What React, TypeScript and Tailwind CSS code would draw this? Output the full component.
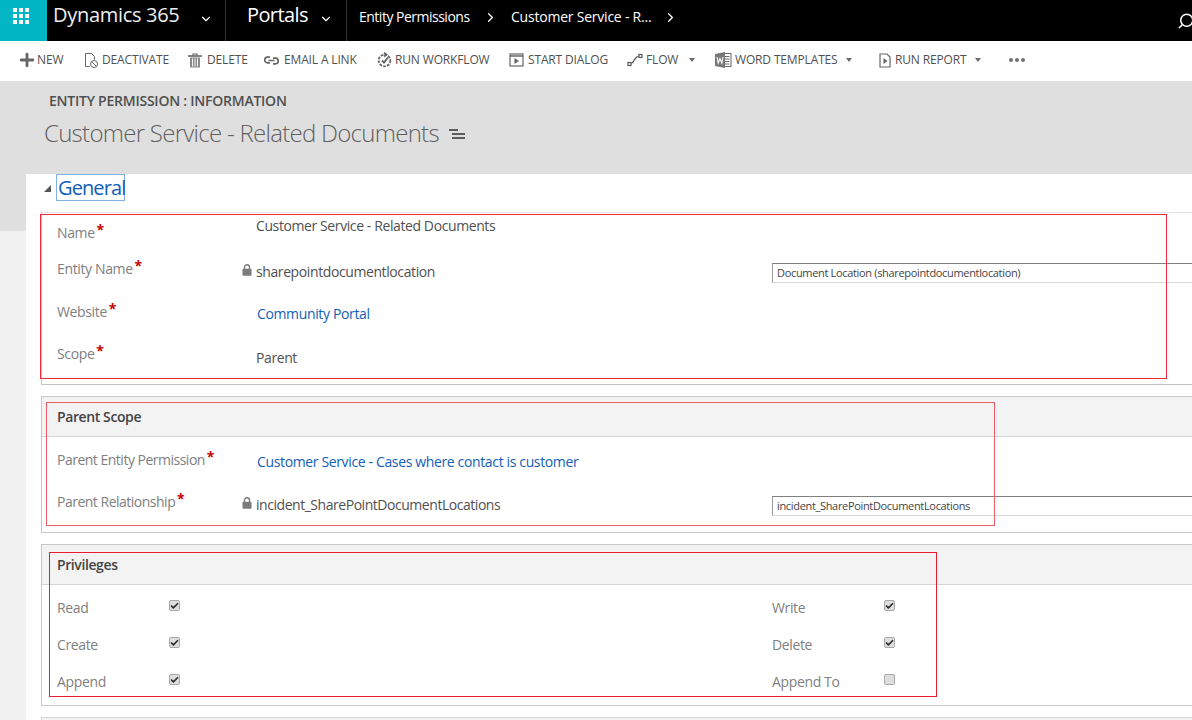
import React from "react";
import { ChevronDown, ChevronRight, Plus, Search, Check } from "lucide-react";

const font = { fontFamily: '"Open Sans", "Noto Sans", sans-serif' };

function Caret() {
  return <span className="block w-0 h-0 border-x-[3.5px] border-x-transparent border-t-[4px] border-t-[#6a6a6a]" />;
}

function CmdIcon({ name }: { name: string }) {
  const c = "#666666";
  if (name === "new") return <Plus size={20} strokeWidth={3.4} color={c} />;
  if (name === "delete")
    return (
      <svg width="14" height="15" viewBox="0 0 14 15" fill="none" stroke={c}>
        <path d="M0 3h14" strokeWidth="1.6" />
        <path d="M5 2.5V1h4v1.5" strokeWidth="1.2" />
        <path d="M2 4.5h10V14.5H2z" fill="#8a8a8a" stroke="none" />
        <path d="M4.5 5.5v8M7 5.5v8M9.5 5.5v8" stroke="#fff" strokeWidth="0.9" />
      </svg>
    );
  if (name === "deactivate")
    return (
      <svg width="15" height="17" viewBox="0 0 15 17" fill="none" stroke={c}>
        <path d="M1.5 1.5h6l3 3v3M1.5 1.5v13h4" />
        <circle cx="10" cy="12" r="3.5" />
        <path d="M7.7 9.7l4.6 4.6" />
      </svg>
    );
  if (name === "link")
    return (
      <svg width="15" height="9" viewBox="0 0 15 9" fill="none" stroke={c} strokeWidth="1.7">
        <path d="M6 1.2H3.5a2.8 2.8 0 000 5.6H6M9 2.2h2.5a2.8 2.8 0 010 5.6H9M4.5 4.5h6" />
      </svg>
    );
  if (name === "workflow")
    return (
      <svg width="15" height="16" viewBox="0 0 15 16" fill="none" stroke={c} strokeWidth="1.8">
        <circle cx="7.5" cy="8.5" r="5.8" strokeDasharray="2.6 1.2" />
        <path d="M5 8.5l2 2 4-5" strokeWidth="2" />
        <path d="M7 .8l2.5 1.8L7 4.4" />
      </svg>
    );
  if (name === "dialog")
    return (
      <svg width="15" height="14" viewBox="0 0 15 14" fill="none" stroke={c} strokeWidth="1.2">
        <rect x="1" y="1" width="13" height="12" />
        <path d="M1 3h13" strokeWidth="1.5" />
        <path d="M5.5 5l4.5 3-4.5 3z" fill={c} stroke="none" />
      </svg>
    );
  if (name === "flow")
    return (
      <svg width="16" height="14" viewBox="0 0 16 14" fill="none" stroke="#555555" strokeWidth="1.2">
        <rect x="1" y="9.5" width="3" height="3" />
        <rect x="12" y="1.5" width="3" height="3" />
        <path d="M4 10c3 0 2-2 4-4s2-3 4-3" />
      </svg>
    );
  if (name === "word")
    return (
      <svg width="17" height="16" viewBox="0 0 17 16">
        <rect x="6" y="1.5" width="10" height="13" fill="#fff" stroke={c} />
        <path d="M10 4.5h4.5M10 7h4.5M10 9.5h4.5M10 12h4.5" stroke={c} />
        <path d="M0 2l10-2v16L0 14z" fill="#777" />
        <path d="M2 5l1.2 6L5 6.5 6.8 11 8 5" fill="none" stroke="#fff" strokeWidth="1.1" />
      </svg>
    );
  return (
    <svg width="12" height="15" viewBox="0 0 12 15" fill="none" stroke={c} strokeWidth="1.2">
      <path d="M1 1h7l3 3v10H1z" />
      <path d="M4.5 5l4 3-4 3z" fill={c} stroke="none" />
    </svg>
  );
}

const commands = [
  { icon: "new", label: "NEW", box: "w-[20px] ml-[17px]", text: "w-[27px]" },
  { icon: "deactivate", label: "DEACTIVATE", box: "w-[18px] ml-[20px]", text: "w-[68px]" },
  { icon: "delete", label: "DELETE", box: "w-[19px] ml-[18px]", text: "w-[40px]" },
  { icon: "link", label: "EMAIL A LINK", box: "w-[20px] ml-[17px]", text: "w-[75px]" },
  { icon: "workflow", label: "RUN WORKFLOW", box: "w-[18px] ml-[18px]", text: "w-[96px]" },
  { icon: "dialog", label: "START DIALOG", box: "w-[19px] ml-[18px]", text: "w-[80px]" },
  { icon: "flow", label: "FLOW", box: "w-[19px] ml-[19px]", text: "w-[32px]", caret: "ml-[11px] w-[26px]" },
  { icon: "word", label: "WORD TEMPLATES", box: "w-[20px] ml-0", text: "w-[104px]", caret: "ml-[7px] w-[26px]" },
  { icon: "report", label: "RUN REPORT", box: "w-[16px] ml-[7px]", text: "w-[72px]", caret: "ml-[8px] w-[35px]" },
];

const valueText = "text-[14px] leading-[20px] tracking-[-0.4px] text-[#505050] whitespace-nowrap";
const linkText = "text-[14px] leading-[20px] tracking-[-0.36px] text-[#1160b7] whitespace-nowrap";
const labelText = "text-[14px] leading-[20px] tracking-[-0.36px] text-[#808080]";
const tightLabelText = "text-[14px] leading-[20px] tracking-[-0.5px] text-[#808080]";

function Required() {
  return <span className="absolute -right-[9px] -top-[2px] text-[14px] leading-[18px] font-bold text-[#c80000]">*</span>;
}

function Label({ text, tight, className }: { text: string; tight?: boolean; className: string }) {
  return (
    <div className={`w-[199px] shrink-0 ${className}`}>
      <span className={`relative ${tight ? tightLabelText : labelText}`}>
        {text}
        <Required />
      </span>
    </div>
  );
}

function Locked() {
  return (
    <svg width="10" height="12" viewBox="0 0 10 12" className="shrink-0">
      <path d="M2.5 5V3.2a2.5 2.5 0 015 0V5" fill="none" stroke="#7b7b7b" strokeWidth="1.4" />
      <rect x="0.5" y="4.8" width="9" height="7" rx="0.8" fill="#7b7b7b" />
    </svg>
  );
}

function Field({ value, className }: { value: string; className?: string }) {
  return (
    <div className={`ml-auto w-[420px] h-[20px] shrink-0 border-t border-l border-b border-t-[#808080] border-l-[#999999] border-b-[#d8d8d8] pl-[4px] text-[11px] leading-[18px] tracking-[-0.33px] text-[#444444] whitespace-nowrap ${className ?? ""}`}>
      {value}
    </div>
  );
}

function Box({ checked }: { checked?: boolean }) {
  return (
    <span className="w-[11px] h-[11px] rounded-[2px] bg-[#dedede] border border-[#a8a8a8] flex items-center justify-center">
      {checked && <Check size={10} strokeWidth={4.5} color="#2e2e2e" />}
    </span>
  );
}

function PrivilegeRow({ left, right, checkedRight }: { left: string; right: string; checkedRight: boolean }) {
  return (
    <div className="flex h-[37px]">
      <span className={`w-[112px] shrink-0 -mt-[2px] ${labelText}`}>{left}</span>
      <span className="w-[603px] shrink-0"><Box checked /></span>
      <span className={`w-[112px] shrink-0 -mt-[2px] ${labelText}`}>{right}</span>
      <Box checked={checkedRight} />
    </div>
  );
}

function SectionHeader({ title }: { title: string }) {
  return (
    <div className="h-[40px] bg-[#f3f3f3] border-b border-[#d4d4d4] pl-[15px] text-[14px] leading-[40px] font-semibold tracking-[-0.4px] text-[#444444]">
      {title}
    </div>
  );
}

export default function App() {
  return (
    <div className="relative w-[1192px] h-[720px] overflow-hidden bg-[#f1f1f1]" style={font}>
      {/* top nav */}
      <header className="h-[41px] bg-black text-white flex items-center">
        <div className="w-[47px] h-full bg-[#00b6c4] flex items-start pl-[13px] pt-[8px]">
          <div className="grid grid-cols-[4px_4px_4px] gap-[2px]">
            {Array.from({ length: 9 }).map((_, i) => (
              <span key={i} className="w-[4px] h-[4px] bg-white" />
            ))}
          </div>
        </div>
        <div className="w-[179px] h-full border-r border-[#333333] flex items-center pl-[6px]">
          <span className="text-[20px] tracking-[-0.3px] text-[#eeeeee] -mt-[11px] w-[146px] whitespace-nowrap">Dynamics 365</span>
          <ChevronDown size={14} className="-mt-[3px]" />
        </div>
        <div className="w-[121px] h-full border-r border-[#333333] flex items-center pl-[21px]">
          <span className="text-[20px] tracking-[-0.6px] -mt-[11px] w-[72px]">Portals</span>
          <ChevronDown size={14} className="-mt-[3px]" />
        </div>
        <span className="ml-[12px] w-[124px] -mt-[8px] text-[14px] tracking-[-0.5px] whitespace-nowrap">Entity Permissions</span>
        <ChevronRight size={15} className="-mt-[6px]" />
        <span className="ml-[13px] w-[144px] -mt-[8px] text-[14px] tracking-[-0.22px] whitespace-nowrap">Customer Service - R...</span>
        <ChevronRight size={15} className="ml-[8px] -mt-[6px]" />
        <Search size={18} className="ml-auto -mr-[3px] -scale-x-100" />
      </header>

      {/* command bar */}
      <nav className="h-[40px] bg-white flex items-center text-[#505050] pb-[2px]">
        {commands.map((c) => (
          <React.Fragment key={c.label}>
            <span className={`${c.box} shrink-0 flex items-center`}>
              <CmdIcon name={c.icon} />
            </span>
            <span className={`${c.text} shrink-0 whitespace-nowrap text-[12px] tracking-[-0.15px]`}>{c.label}</span>
            {c.caret && (
              <span className={`${c.caret} shrink-0`}>
                <Caret />
              </span>
            )}
          </React.Fragment>
        ))}
        <span className="ml-[-1px] flex gap-[2px]">
          <span className="w-[4px] h-[4px] rounded-full bg-[#707070]" />
          <span className="w-[4px] h-[4px] rounded-full bg-[#707070]" />
          <span className="w-[4px] h-[4px] rounded-full bg-[#707070]" />
        </span>
      </nav>

      {/* title strip */}
      <div className="h-[93px] bg-[#dfdfdf] pt-[10px]">
        <div className="pl-[49px] text-[14px] leading-[19px] font-semibold tracking-[-0.24px] text-[#505050]">ENTITY PERMISSION : INFORMATION</div>
        <div className="pl-[44px] mt-[7px] flex items-center text-[24px] leading-[32px] font-light tracking-[-0.72px] text-[#5f5f5f]">
          <span className="w-[404px] whitespace-nowrap">Customer Service - Related Documents</span>
          <svg width="18" height="12" viewBox="0 0 18 12" stroke="#333333" strokeWidth="1.6" className="mt-[2px]">
            <path d="M1 2h9M4 6h13M4 10h13" />
          </svg>
        </div>
      </div>

      <div className="flex">
        <div className="w-[26px] shrink-0">
          <div className="h-[57px] bg-[#dfdfdf]" />
        </div>

        {/* form */}
        <main className="flex-1 h-[546px] bg-white pl-[15px]">
          <div className="flex items-start h-[39px]">
            <span className="w-0 h-0 mt-[11px] ml-[3px] border-l-[7px] border-l-transparent border-b-[7px] border-b-[#555555]" />
            <span className="ml-[5px] h-[27px] w-[69px] border border-[#7fb0e8] text-[20px] leading-[26px] tracking-[-0.9px] text-[#1160b7] pl-px">General</span>
          </div>

          <section className="h-[173px] border-l border-b border-t border-t-[#e4e4e4] border-l-[#c8c8c8] border-b-[#c4c4c4] pl-[15px] -mt-[1px]">
            <div className="flex h-[41px]">
              <Label text="Name" className="pt-[7px]" />
              <span className={`pt-[3px] ${valueText}`}>Customer Service - Related Documents</span>
            </div>
            <div className="flex h-[42px]">
              <Label text="Entity Name" className="pt-[2px]" />
              <span className={`flex items-start gap-[4px] -ml-[14px] pt-[8px] ${valueText}`}>
                <span className="mt-[2px]"><Locked /></span>
                sharepointdocumentlocation
              </span>
              <Field value="Document Location (sharepointdocumentlocation)" className="mt-[9px]" />
            </div>
            <div className="flex h-[42px]">
              <Label text="Website" className="pt-[3px]" />
              <span className={`pt-[8px] ml-[1px] ${linkText}`}>Community Portal</span>
            </div>
            <div className="flex h-[42px]">
              <Label text="Scope" className="pt-[3px]" />
              <span className={`pt-[10px] ${valueText}`}>Parent</span>
            </div>
          </section>

          <section className="mt-[11px] h-[137px] border border-r-0 border-[#c8c8c8]">
            <SectionHeader title="Parent Scope" />
            <div className="flex h-[42px] pl-[15px]">
              <Label text="Parent Entity Permission" tight className="pt-[10px]" />
              <span className={`pt-[15px] ml-[1px] ${linkText}`}>Customer Service - Cases where contact is customer</span>
            </div>
            <div className="flex h-[42px] pl-[15px]">
              <Label text="Parent Relationship" tight className="pt-[10px]" />
              <span className={`flex items-start gap-[4px] -ml-[14px] pt-[16px] ${valueText} tracking-[-0.46px]`}>
                <span className="mt-[2px]"><Locked /></span>
                incident_SharePointDocumentLocations
              </span>
              <Field value="incident_SharePointDocumentLocations" className="mt-[17px]" />
            </div>
          </section>

          <section className="mt-[11px] h-[162px] border border-r-0 border-[#c8c8c8]">
            <SectionHeader title="Privileges" />
            <div className="pl-[15px] pt-[15px]">
              <PrivilegeRow left="Read" right="Write" checkedRight />
              <PrivilegeRow left="Create" right="Delete" checkedRight />
              <PrivilegeRow left="Append" right="Append To" checkedRight={false} />
            </div>
          </section>

          <div className="mt-[11px] h-[3px] border-t border-l border-[#d4d4d4] bg-[#f3f3f3]" />
        </main>
      </div>

      {/* red annotation boxes */}
      <div className="absolute left-[40px] top-[214px] w-[1127px] h-[165px] border border-[#ee2a3a]" />
      <div className="absolute left-[46px] top-[402px] w-[949px] h-[124px] border border-[#ee5a66]" />
      <div className="absolute left-[49px] top-[552px] w-[888px] h-[145px] border border-[#e81c2c]" />
    </div>
  );
}
